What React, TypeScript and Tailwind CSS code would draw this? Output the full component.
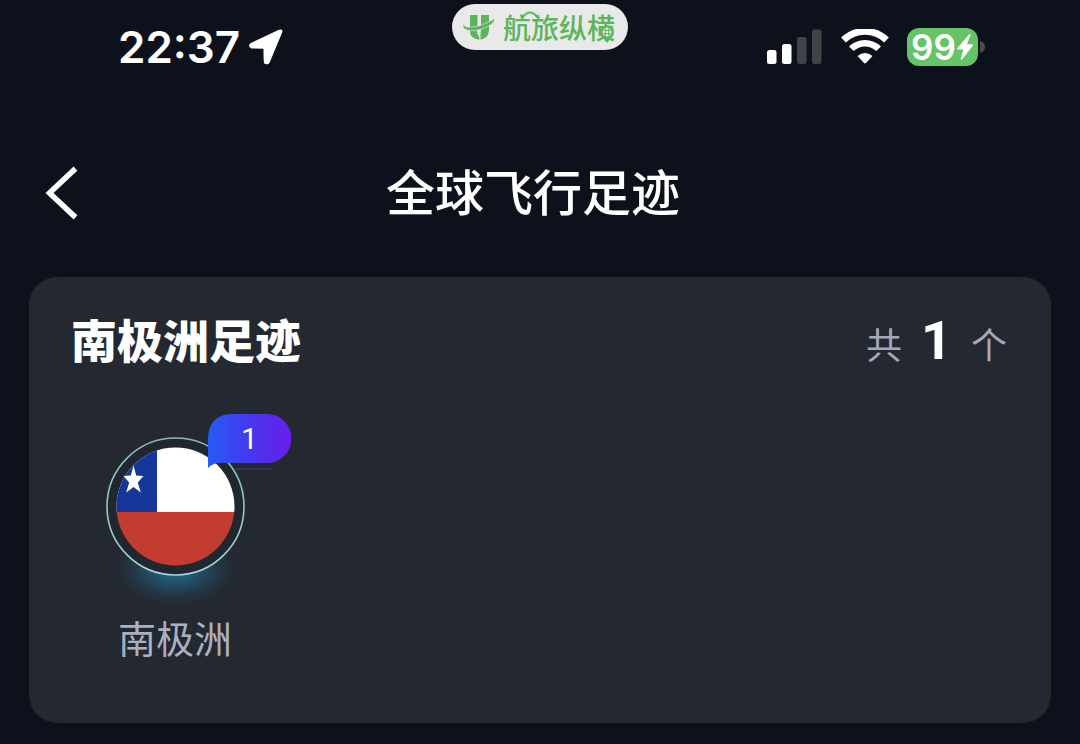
import React from "react";

const CJK = "font-['Noto_Sans_CJK_SC',sans-serif]";

function LocationArrow() {
  return (
    <svg className="h-9 w-9" viewBox="0 0 36 36" aria-hidden="true">
      <path
        d="M33 2.500 L20.500 32.500 Q19.500 34.500 17.500 33.500 Q17 32.500 17 20.500 Q17 18.500 15 18.300 L4 18 Q1.500 17 3.200 15.500 L31.500 2.200 Q33 1.800 33 2.500 Z"
        fill="#fff"
        stroke="#fff"
        strokeWidth="3"
        strokeLinejoin="round"
      />
    </svg>
  );
}

function BrandMark() {
  return (
    <svg className="h-7 w-8" viewBox="0 0 32 28" fill="#5cb55c" aria-hidden="true">
      <path d="M7 2 H14.500 V17 Q14.500 20 16.200 20 Q18 20 18 17 V2 H26 V18 Q25 26.500 16 26.500 Q7 26 7 18 Z" />
      <path
        d="M2 9 Q-1.500 14 6.500 14.200 Q16 14 24 9.800 Q30 7 31 5.500 Q33 8.500 26 12.800 Q16 18.500 6 17.500 Q-3.500 15.500 2 9 Z"
        stroke="#e9e9e9"
        strokeWidth="0.6"
      />
      <path d="M14 18 L17.500 17.500 V25.500 L16 26.500 Q17 24 15.500 22.500 Q14 21 14 18 Z" fill="#e9e9e9" />
    </svg>
  );
}

function Brand() {
  return (
    <div className="relative flex h-[46px] w-44 items-center gap-2 rounded-full bg-[#e9e9e9] pl-[11px]">
      <BrandMark />
      <span className={`${CJK} text-[28px] leading-none font-medium text-[#5cb55c]`}>航旅纵横</span>
      <svg className="absolute top-1.5 left-[68px] h-3 w-6" viewBox="0 0 24 12" fill="none" aria-hidden="true">
        <path d="M2 8 Q10 -3 18 8" stroke="#5cb55c" strokeWidth="1.800" />
      </svg>
      <svg className="absolute top-[21px] left-[147px] h-[18px] w-4" viewBox="0 0 16 18" aria-hidden="true">
        <path d="M8 18 L3 12 A7 7 0 1 1 13 12 Z" fill="#5cb55c" />
        <circle cx="8" cy="7" r="4.500" fill="#e9e9e9" />
        <path d="M6.300 3 V11 M9.700 3 V11 M4 5.300 H12 M4 8.700 H12" stroke="#5cb55c" strokeWidth="1" />
      </svg>
    </div>
  );
}

function Signal() {
  return (
    <svg className="h-9 w-14" viewBox="0 0 56 36" role="img" aria-label="信号">
      <rect x="0" y="21" width="9.500" height="14" rx="2.500" fill="#fff" />
      <rect x="15" y="15" width="9.500" height="20" rx="2.500" fill="#fff" />
      <rect x="30" y="8" width="9.500" height="27" rx="2.500" fill="#414349" />
      <rect x="45" y="0.500" width="9.500" height="34.500" rx="2.500" fill="#414349" />
    </svg>
  );
}

function Wifi() {
  return (
    <svg className="h-9 w-12" viewBox="0 0 48 36" role="img" aria-label="无线网络">
      <g transform="translate(0 -1)">
        <path d="M2.500 12 A31 31 0 0 1 45.500 12" fill="none" stroke="#fff" strokeWidth="6.800" />
        <path d="M10.300 20.800 A19.500 19.500 0 0 1 37.700 20.800" fill="none" stroke="#fff" strokeWidth="6.500" />
        <path d="M16.500 28 Q24 21.800 31.500 28 L25.200 34.800 Q24 36 22.800 34.800 Z" fill="#fff" />
      </g>
    </svg>
  );
}

function Battery() {
  return (
    <div className="flex items-center gap-0.5">
      <div className="flex h-[38px] w-[71px] items-center justify-center rounded-xl bg-[#65c466] text-white">
        <span className="font-['Inter',sans-serif] text-[35px] leading-none font-semibold">99</span>
        <svg className="h-7 w-[18px]" viewBox="0 0 18 28" fill="#fff" aria-hidden="true">
          <path d="M13.500 1 L1 15.500 Q0.800 16.500 2 16.500 H7.500 L4.500 26 Q5 27.500 6.500 26 L17 12.500 Q17.500 11.200 16 11.200 H11 L14.500 2 Q14.500 0.500 13.500 1 Z" />
        </svg>
      </div>
      <svg className="h-3 w-[5px]" viewBox="0 0 5 12" aria-hidden="true">
        <path d="M0 0 Q5 1.500 5 6 Q5 10.500 0 12 Z" fill="#4b4d53" />
      </svg>
    </div>
  );
}

function StatusBar() {
  return (
    <div className="grid h-[94px] grid-cols-[1fr_auto_1fr] items-center">
      <div className="flex items-center gap-2 pl-[118px]">
        <time className="font-['Inter',sans-serif] text-[44px] leading-none font-semibold">22:37</time>
        <LocationArrow />
      </div>
      <div className="self-start pt-1">
        <Brand />
      </div>
      <div className="flex items-center justify-end gap-[18px] pr-[95px]">
        <Signal />
        <Wifi />
        <Battery />
      </div>
    </div>
  );
}

function Header() {
  return (
    <header className="grid h-[183px] grid-cols-[1fr_auto_1fr] items-center pt-3">
      <button type="button" aria-label="返回" className="ml-11 w-9">
        <svg className="h-14 w-9" viewBox="0 0 36 56" fill="none" aria-hidden="true">
          <path d="M29.500 6.500 L5.500 29 L29.500 51.500" stroke="#fff" strokeWidth="5.500" strokeLinecap="square" />
        </svg>
      </button>
      <h1 className={`${CJK} -ml-3.5 pb-1 text-[49px] leading-none font-medium`}>全球飞行足迹</h1>
    </header>
  );
}

function ChileFlag() {
  return (
    <svg className="h-[190px] w-[180px] overflow-visible" viewBox="0 0 180 190" role="img" aria-label="智利国旗">
      <defs>
        <radialGradient id="glow">
          <stop offset="0" stopColor="#2585b5" stopOpacity="0.85" />
          <stop offset="0.5" stopColor="#22617e" stopOpacity="0.45" />
          <stop offset="1" stopColor="#242831" stopOpacity="0" />
        </radialGradient>
        <linearGradient id="ring" x1="0" y1="0" x2="0" y2="1">
          <stop offset="0" stopColor="#86b8b5" />
          <stop offset="1" stopColor="#a0d5dc" />
        </linearGradient>
        <clipPath id="disc">
          <circle cx="89.500" cy="92.500" r="59" />
        </clipPath>
      </defs>
      <ellipse cx="89.500" cy="155" rx="70" ry="42" fill="url(#glow)" />
      <circle cx="89.500" cy="92.500" r="68.500" fill="#20272f" stroke="url(#ring)" strokeWidth="1.600" />
      <g clipPath="url(#disc)">
        <rect x="30" y="30" width="120" height="68" fill="#fff" />
        <rect x="30" y="30" width="41" height="68" fill="#16369a" />
        <rect x="30" y="98" width="120" height="60" fill="#c23d2f" />
      </g>
      <path
        d="M47.500 51.500 L50.200 61.500 L57.500 62 L51.800 68.500 L54.800 78.500 L47.500 73 L40.200 78.500 L43.200 68.500 L37.500 62 L44.800 61.500 Z"
        fill="#fff"
      />
    </svg>
  );
}

function CountBadge({ count }: { count: number }) {
  return (
    <div className="absolute top-0 left-[122px] h-14 w-[83px]">
      <svg className="absolute inset-0 h-14 w-[83px]" viewBox="0 0 83 56" aria-hidden="true">
        <defs>
          <linearGradient id="bubble">
            <stop offset="0" stopColor="#265bf5" />
            <stop offset="0.5" stopColor="#4538ed" />
            <stop offset="1" stopColor="#6b1ceb" />
          </linearGradient>
        </defs>
        <path d="M0 54 V24 Q1 0 25 0 H59 A24 24 0 0 1 59 49 H12 Q5 49 0 54 Z" fill="url(#bubble)" />
        <path d="M27 55 H64" stroke="#493a82" strokeWidth="1" />
      </svg>
      <span className="relative block h-[49px] text-center font-['Roboto',sans-serif] text-[30px] leading-[50px]">
        {count}
      </span>
    </div>
  );
}

function Footprint({ name, count }: { name: string; count: number }) {
  return (
    <li className="relative flex w-[180px] flex-col items-center">
      <ChileFlag />
      <CountBadge count={count} />
      <span className={`${CJK} mt-3.5 pr-0.5 text-[38px] leading-none text-[#aab0c0]`}>{name}</span>
    </li>
  );
}

export default function App() {
  return (
    <div className={`${CJK} min-h-screen bg-[#0d111b] pb-5 text-white`} lang="zh-CN">
      <StatusBar />
      <Header />
      <main className="mx-[29px] rounded-[28px] bg-[#242831] pb-[67px]">
        <div className="flex h-[137px] items-start justify-between pt-9 pr-11 pl-[42px]">
          <h2 className="text-[46px] leading-[50px] font-black">南极洲足迹</h2>
          <p className="flex items-baseline gap-[19px] text-[36px] leading-[60px] text-[#a3a9ba]">
            共
            <strong className="font-['Roboto',sans-serif] text-[54px] leading-[52px] font-bold text-white">
              1
            </strong>
            个
          </p>
        </div>
        <ul className="flex flex-wrap pl-[57px]">
          <Footprint name="南极洲" count={1} />
        </ul>
      </main>
    </div>
  );
}
